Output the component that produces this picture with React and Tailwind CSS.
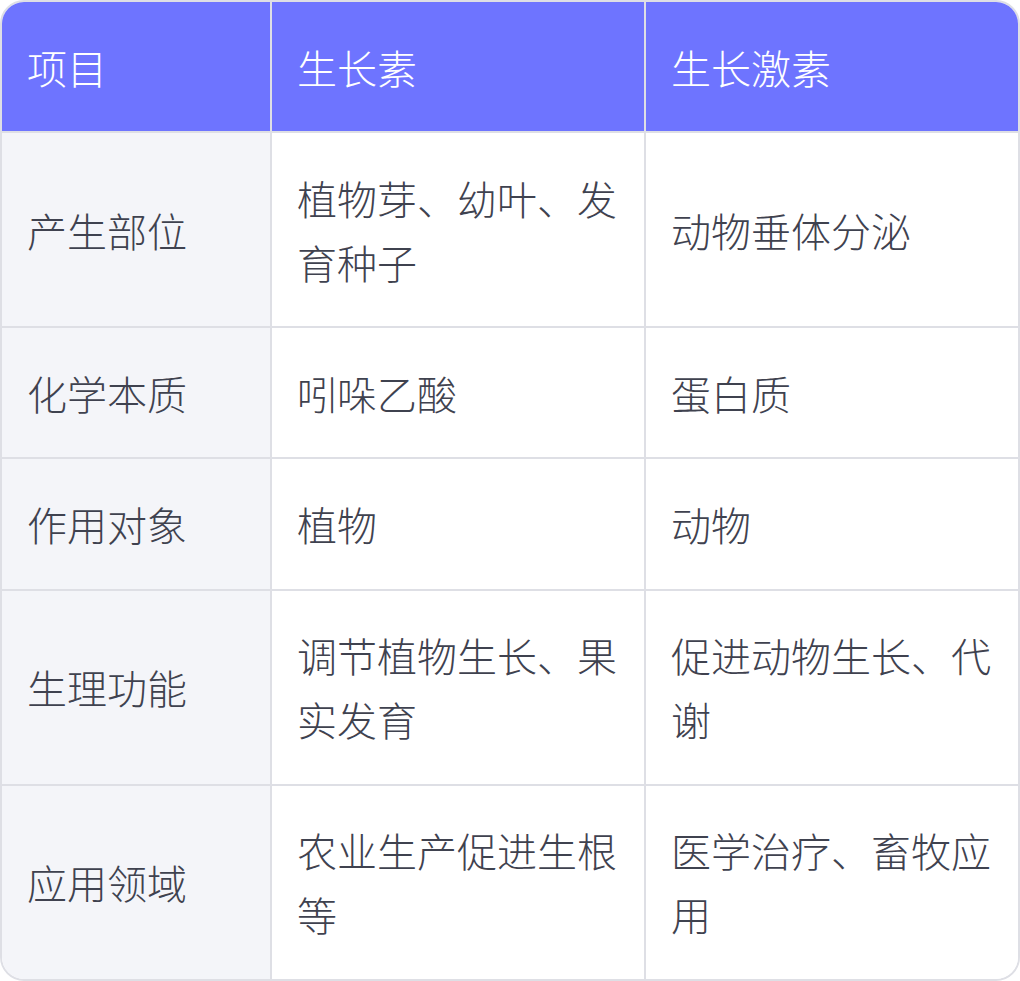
import React from 'react';

const rows = [
  { item: '产生部位', auxin: '植物芽、幼叶、发育种子', hgh: '动物垂体分泌' },
  { item: '化学本质', auxin: '吲哚乙酸', hgh: '蛋白质' },
  { item: '作用对象', auxin: '植物', hgh: '动物' },
  { item: '生理功能', auxin: '调节植物生长、果实发育', hgh: '促进动物生长、代谢' },
  { item: '应用领域', auxin: '农业生产促进生根等', hgh: '医学治疗、畜牧应用' },
];

const cell = 'flex items-center pl-[25px] pr-[25px] py-[32.58px] leading-[64px]';

const App = () => {
  return (
    <div className="w-[1020px] bg-white" style={{ fontFamily: '"Noto Sans CJK SC", "Noto Sans", sans-serif' }}>
      <div className="border-2 border-[#dedfe5] rounded-[24px] overflow-hidden text-[40px] font-light">
        <div className="grid grid-cols-[270px_374px_1fr] bg-[#6e74ff] text-white border-b-2 border-[#dedfe5]">
          <div className={`${cell} border-r-2 border-[#dedfe5]`}>项目</div>
          <div className={`${cell} border-r-2 border-[#dedfe5]`}>生长素</div>
          <div className={cell}>生长激素</div>
        </div>
        {rows.map((r, i) => (
          <div
            key={r.item}
            className={`grid grid-cols-[270px_374px_1fr] text-[#3f424f] ${i < rows.length - 1 ? 'border-b-2 border-[#dedfe5]' : ''}`}
          >
            <div className={`${cell} bg-[#f4f5f9] border-r-2 border-[#dedfe5]`}>{r.item}</div>
            <div className={`${cell} bg-white border-r-2 border-[#dedfe5]`}>{r.auxin}</div>
            <div className={`${cell} bg-white`}>{r.hgh}</div>
          </div>
        ))}
      </div>
    </div>
  );
};

export default App;
